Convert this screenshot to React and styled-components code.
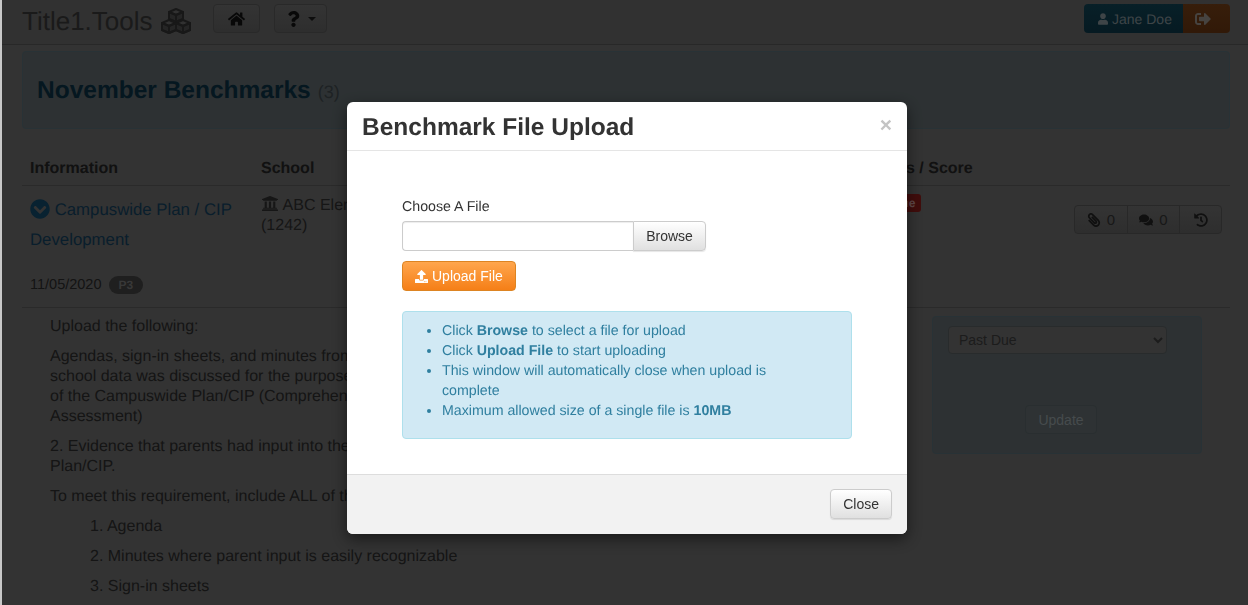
import styled, { createGlobalStyle } from "styled-components";
import {
  FaHome,
  FaQuestion,
  FaUser,
  FaSignOutAlt,
  FaChevronCircleDown,
  FaUniversity,
  FaPaperclip,
  FaComments,
  FaHistory,
  FaUpload,
} from "react-icons/fa";

const GlobalStyle = createGlobalStyle`
  html, body {
    margin: 0;
    height: 100%;
    overflow: hidden;
  }
  body {
    font-family: "Liberation Sans", Arial, sans-serif;
    font-size: 14px;
    line-height: 20px;
    color: #333;
    background: #666;
    text-rendering: geometricPrecision;
  }
  * {
    box-sizing: border-box;
  }
  p {
    margin: 0 0 10px;
  }
`;

function Cube({ x, y }) {
  return (
    <g transform={`translate(${x} ${y})`}>
      <path d="M-7 -3 L0 0 L0 7 L-7 4 Z M7 -3 L0 0 L0 7 L7 4 Z" fill="currentColor" fillOpacity="0.45" />
      <path d="M0 -6 L7 -3 L7 4 L0 7 L-7 4 L-7 -3 Z" />
      <path d="M-7 -3 L0 0 L7 -3 M0 0 L0 7" />
    </g>
  );
}

function CubesIcon() {
  return (
    <svg viewBox="0 0 30 26" width="30" height="26" fill="none" stroke="currentColor" strokeWidth="2" strokeLinejoin="round">
      <Cube x={15} y={7} />
      <Cube x={8} y={18} />
      <Cube x={22} y={18} />
    </svg>
  );
}

export default function App() {
  return (
    <>
      <GlobalStyle />
      <Page>
        <Navbar>
          <Brand>
            Title1.Tools <CubesIcon />
          </Brand>
          <NavButton>
            <FaHome />
          </NavButton>
          <NavButton $wide>
            <FaQuestion />
            <Caret />
          </NavButton>
          <UserGroup>
            <UserName>
              <FaUser /> Jane Doe
            </UserName>
            <LogOut>
              <FaSignOutAlt />
            </LogOut>
          </UserGroup>
        </Navbar>

        <Banner>
          <h1>November Benchmarks</h1> <small>(3)</small>
        </Banner>

        <TableHead>
          <span>Information</span>
          <span>School</span>
          <span>Status / Score</span>
        </TableHead>

        <TableRow>
          <div>
            <TaskLink>
              <FaChevronCircleDown /> Campuswide Plan / CIP Development
            </TaskLink>
            <DateLine>
              11/05/2020 <Pill>P3</Pill>
            </DateLine>
          </div>
          <SchoolCell>
            <FaUniversity /> ABC Elementary School
            <br />
            (1242)
          </SchoolCell>
          <StatusCell>
            <PastDue>Past Due</PastDue>
            <CountGroup>
              <button>
                <FaPaperclip className="clip" /> 0
              </button>
              <button>
                <FaComments /> 0
              </button>
              <button>
                <FaHistory />
              </button>
            </CountGroup>
          </StatusCell>
        </TableRow>

        <Detail>
          <Instructions>
            <p>Upload the following:</p>
            <p>
              Agendas, sign-in sheets, and minutes from meetings where
              <br />
              school data was discussed for the purpose of the development
              <br />
              of the Campuswide Plan/CIP (Comprehensive Needs
              <br />
              Assessment)
            </p>
            <p>
              2. Evidence that parents had input into the Campuswide
              <br />
              Plan/CIP.
            </p>
            <p>To meet this requirement, include ALL of the following:</p>
            <SubItem>1. Agenda</SubItem>
            <SubItem>2. Minutes where parent input is easily recognizable</SubItem>
            <SubItem>3. Sign-in sheets</SubItem>
          </Instructions>
          <StatusPanel>
            <StatusSelect defaultValue="Past Due">
              <option>Past Due</option>
            </StatusSelect>
            <UpdateButton>Update</UpdateButton>
          </StatusPanel>
        </Detail>
      </Page>

      <Backdrop />

      <Modal>
        <ModalHeader>
          <h4>Benchmark File Upload</h4>
          <CloseX>×</CloseX>
        </ModalHeader>
        <ModalBody>
          <FieldLabel>Choose A File</FieldLabel>
          <FileRow>
            <FileName readOnly />
            <BrowseButton>Browse</BrowseButton>
          </FileRow>
          <UploadButton>
            <FaUpload /> Upload File
          </UploadButton>
          <InfoBox>
            <ul>
              <li>
                Click <b>Browse</b> to select a file for upload
              </li>
              <li>
                Click <b>Upload File</b> to start uploading
              </li>
              <li>This window will automatically close when upload is complete</li>
              <li>
                Maximum allowed size of a single file is <b>10MB</b>
              </li>
            </ul>
          </InfoBox>
        </ModalBody>
        <ModalFooter>
          <DefaultButton>Close</DefaultButton>
        </ModalFooter>
      </Modal>
    </>
  );
}

const Page = styled.div`
  height: 605px;
  overflow: hidden;
  border-left: 2px solid #c8c8c8;
`;

const Navbar = styled.div`
  display: flex;
  align-items: flex-start;
  height: 45px;
  padding: 4px 18px 0 20px;
  background: #626262;
  border-bottom: 1px solid #505050;
`;

const Brand = styled.div`
  display: flex;
  align-items: center;
  gap: 8px;
  width: 191px;
  height: 30px;
  margin-top: 2px;
  font-size: 26px;
  color: #343434;
  svg {
    color: #303030;
  }
`;

const NavButton = styled.button`
  display: flex;
  align-items: center;
  justify-content: center;
  gap: 6px;
  width: ${(props) => (props.$wide ? "53px" : "47px")};
  height: 29px;
  margin-right: 14px;
  padding: 0;
  border: 1px solid #525252;
  border-radius: 4px;
  background: linear-gradient(#686868, #5c5c5c);
  color: #101010;
  svg {
    width: 17px;
    height: 16px;
  }
  svg + span {
    margin-top: 1px;
  }
`;

const Caret = styled.span`
  width: 0;
  height: 0;
  border-top: 4px solid #1a1a1a;
  border-left: 4px solid transparent;
  border-right: 4px solid transparent;
`;

const UserGroup = styled.div`
  display: flex;
  height: 29px;
  margin-left: auto;
  border-radius: 4px;
  overflow: hidden;
`;

const UserName = styled.div`
  display: flex;
  align-items: center;
  gap: 4px;
  width: 99px;
  padding-left: 14px;
  background: linear-gradient(#104050, #0c3444);
  color: #7c898f;
  font-size: 14px;
  svg {
    width: 10px;
    height: 12px;
  }
`;

const LogOut = styled.div`
  display: flex;
  align-items: center;
  width: 47px;
  padding-left: 12px;
  background: linear-gradient(#6e3c16, #623210);
  color: #8c8680;
  svg {
    width: 16px;
    height: 16px;
  }
`;

const Banner = styled.div`
  display: flex;
  align-items: baseline;
  gap: 7px;
  height: 78px;
  margin: 6px 18px 0 20px;
  padding: 24px 14px 0;
  background: #5a6366;
  border: 1px solid #50646c;
  border-radius: 4px;
  h1 {
    margin: 0;
    font-size: 24.5px;
    line-height: 30px;
    color: #0a2e40;
  }
  small {
    font-size: 18px;
    color: #3c4448;
  }
`;

const TableHead = styled.div`
  display: grid;
  grid-template-columns: 231px 605px 1fr;
  height: 36px;
  margin: 21px 18px 0 20px;
  padding-top: 9px;
  border-bottom: 1px solid #545454;
  font-size: 16px;
  font-weight: bold;
  color: #222;
  span {
    padding-left: 8px;
  }
`;

const TableRow = styled.div`
  display: grid;
  grid-template-columns: 231px 605px 1fr;
  height: 122px;
  margin: 0 18px 0 20px;
  border-bottom: 1px solid #545454;
`;

const TaskLink = styled.div`
  padding: 9px 8px 0;
  font-size: 16.8px;
  line-height: 30px;
  color: #123c58;
  svg {
    width: 20px;
    height: 20px;
    vertical-align: -4px;
    color: #104462;
  }
`;

const DateLine = styled.div`
  display: flex;
  align-items: center;
  gap: 3px;
  margin-top: 20px;
  padding-left: 8px;
  font-size: 14.5px;
  color: #282828;
`;

const Pill = styled.span`
  height: 18px;
  margin-left: 4px;
  padding: 0 10px;
  border-radius: 9px;
  background: #3e3e3e;
  color: #707070;
  font-size: 12px;
  font-weight: bold;
  line-height: 18px;
`;

const SchoolCell = styled.div`
  padding: 9px 8px 0;
  font-size: 16px;
  color: #2c2c2c;
  svg {
    width: 18px;
    height: 17px;
    vertical-align: -2px;
  }
`;

const StatusCell = styled.div`
  display: flex;
  justify-content: space-between;
  align-items: flex-start;
  padding: 8px 8px 0 0;
`;

const PastDue = styled.span`
  height: 18px;
  padding: 0 6px;
  border-radius: 3px;
  background: #801a18;
  color: #c09090;
  font-size: 12px;
  font-weight: bold;
  line-height: 18px;
`;

const CountGroup = styled.div`
  display: flex;
  margin-top: 11px;
  button {
    display: flex;
    align-items: center;
    justify-content: center;
    gap: 6px;
    height: 29px;
    padding: 0 11.5px;
    border: 1px solid #505050;
    margin-left: -1px;
    background: linear-gradient(#686868, #5c5c5c);
    font: 15px "Liberation Sans", Arial, sans-serif;
    color: #303030;
  }
  button:first-child {
    border-radius: 4px 0 0 4px;
  }
  button:last-child {
    padding: 0 13.5px;
    border-radius: 0 4px 4px 0;
  }
  svg {
    width: 14px;
    height: 14px;
    color: #202020;
  }
  .clip {
    transform: scaleX(-1);
  }
`;

const Detail = styled.div`
  display: grid;
  grid-template-columns: 1fr 270px;
  margin: 8px 46px 0 48px;
`;

const Instructions = styled.div`
  min-width: 0;
  padding-top: 1px;
  font-size: 16px;
  color: #2a2a2a;
`;

const SubItem = styled.p`
  padding-left: 40px;
`;

const StatusPanel = styled.div`
  display: flex;
  flex-direction: column;
  align-items: flex-start;
  height: 138px;
  padding: 9px 15px;
  background: #5a6366;
  border: 1px solid #50646c;
  border-radius: 4px;
`;

const StatusSelect = styled.select`
  width: 219px;
  height: 28px;
  padding: 0 6px;
  border: 1px solid #505658;
  border-radius: 4px;
  background: #666;
  font: 14px "Liberation Sans", Arial, sans-serif;
  color: #383838;
`;

const UpdateButton = styled.button`
  width: 72px;
  height: 29px;
  margin: 51px 0 0 77px;
  padding: 0;
  border: 1px solid #525c60;
  border-radius: 4px;
  background: #5c6568;
  font: 14px "Liberation Sans", Arial, sans-serif;
  color: #8c969a;
`;

const Backdrop = styled.div`
  position: fixed;
  inset: 0 0 0 2px;
  background: rgba(0, 0, 0, 0.5);
`;

const Modal = styled.div`
  position: fixed;
  left: 347px;
  top: 102px;
  display: flex;
  flex-direction: column;
  width: 560px;
  height: 432px;
  border-radius: 6px;
  background: #fff;
  box-shadow: 0 5px 15px rgba(0, 0, 0, 0.5);
  overflow: hidden;
`;

const ModalHeader = styled.div`
  display: flex;
  align-items: center;
  justify-content: space-between;
  height: 49px;
  padding: 0 15px;
  border-bottom: 1px solid #e5e5e5;
  h4 {
    margin: 4px 0 0;
    font-size: 24.5px;
    line-height: 44px;
    font-weight: bold;
    color: #333;
  }
`;

const CloseX = styled.span`
  font-size: 21px;
  font-weight: bold;
  color: #c4c4c4;
`;

const ModalBody = styled.div`
  flex: 1;
  padding: 45px 55px 0;
`;

const FieldLabel = styled.div`
  height: 25px;
  padding-top: 1px;
  font-size: 14.2px;
  color: #333;
`;

const FileRow = styled.div`
  display: flex;
  height: 30px;
  width: 304px;
`;

const FileName = styled.input`
  flex: 1;
  min-width: 0;
  border: 1px solid #ccc;
  border-right: 0;
  border-radius: 4px 0 0 4px;
  box-shadow: inset 0 1px 1px rgba(0, 0, 0, 0.075);
`;

const DefaultButton = styled.button`
  height: 30px;
  padding: 0 12px;
  border: 1px solid #ccc;
  border-radius: 4px;
  background: linear-gradient(#fff, #e0e0e0);
  box-shadow: 0 1px 1px rgba(0, 0, 0, 0.1);
  font: 14px "Liberation Sans", Arial, sans-serif;
  color: #333;
`;

const BrowseButton = styled(DefaultButton)`
  width: 73px;
  padding: 0;
  border-radius: 0 4px 4px 0;
`;

const UploadButton = styled.button`
  display: flex;
  align-items: center;
  gap: 4px;
  width: 114px;
  height: 30px;
  margin-top: 10px;
  padding: 0 12px;
  border: 1px solid #dd8422;
  border-radius: 4px;
  background: linear-gradient(#ffa64d, #f57f17);
  font: 14px "Liberation Sans", Arial, sans-serif;
  color: #fff;
  white-space: nowrap;
  svg {
    width: 13px;
    height: 13px;
  }
`;

const InfoBox = styled.div`
  width: 450px;
  height: 128px;
  margin-top: 20px;
  padding: 9px 15px;
  background: #d1e9f4;
  border: 1px solid #aee0ec;
  border-radius: 4px;
  font-size: 14.2px;
  color: #2f7f9f;
  ul {
    margin: 0;
    padding: 0 40px 0 24px;
  }
`;

const ModalFooter = styled.div`
  display: flex;
  justify-content: flex-end;
  align-items: flex-start;
  height: 60px;
  padding: 14px 15px 0;
  background: #f2f2f2;
  border-top: 1px solid #ddd;
`;
